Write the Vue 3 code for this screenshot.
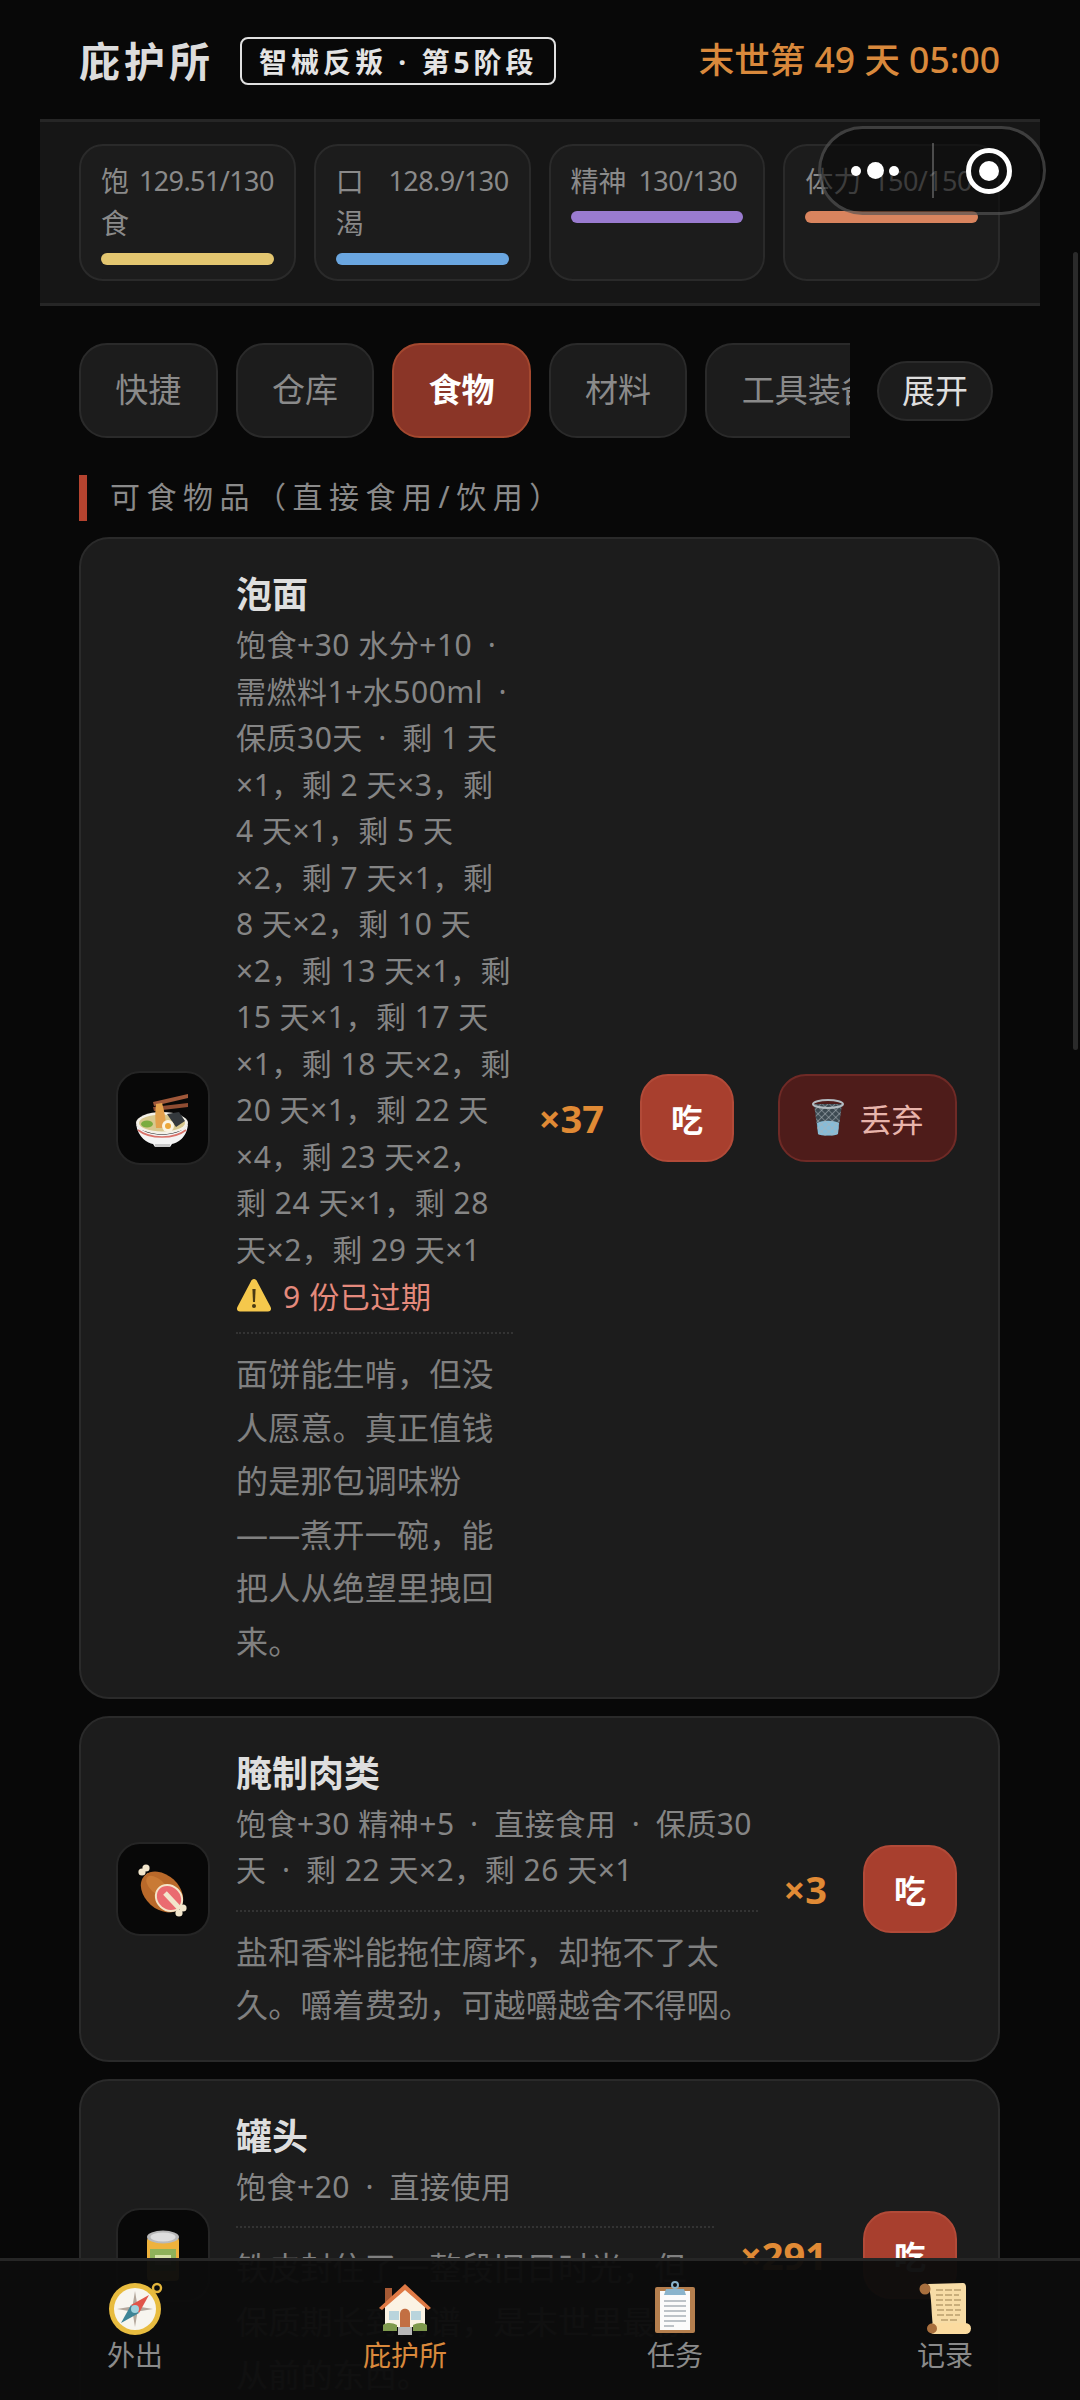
<script setup>
import { ref } from "vue";

const stats = [
  { label: "饱食", value: "129.51/130", color: "#e3c670" },
  { label: "口渴", value: "128.9/130", color: "#6aa6e0" },
  { label: "精神", value: "130/130", color: "#9a7bd0" },
  { label: "体力", value: "150/150", color: "#d9845e" }
];

const tabs = ["快捷", "仓库", "食物", "材料", "工具装备"];
const activeTab = ref("食物");

// the dots between parts of a description sit wider than a plain space
function spaced(line) {
  return line.replace(/ · /g, "\u2002·\u2002").replace(/ ·$/, "\u2002·");
}

// desc and lore are split by line, the wraps have to stay as they are
const items = [
  {
    name: "泡面",
    icon: "noodle",
    count: 37,
    canDiscard: true,
    expired: 9,
    desc: [
      "饱食+30 水分+10 ·",
      "需燃料1+水500ml ·",
      "保质30天 · 剩 1 天",
      "×1，剩 2 天×3，剩",
      "4 天×1，剩 5 天",
      "×2，剩 7 天×1，剩",
      "8 天×2，剩 10 天",
      "×2，剩 13 天×1，剩",
      "15 天×1，剩 17 天",
      "×1，剩 18 天×2，剩",
      "20 天×1，剩 22 天",
      "×4，剩 23 天×2，",
      "剩 24 天×1，剩 28",
      "天×2，剩 29 天×1"
    ],
    lore: ["面饼能生啃，但没", "人愿意。真正值钱", "的是那包调味粉", "——煮开一碗，能", "把人从绝望里拽回", "来。"]
  },
  {
    name: "腌制肉类",
    icon: "meat",
    count: 3,
    desc: ["饱食+30 精神+5 · 直接食用 · 保质30", "天 · 剩 22 天×2，剩 26 天×1"],
    lore: ["盐和香料能拖住腐坏，却拖不了太", "久。嚼着费劲，可越嚼越舍不得咽。"]
  },
  {
    name: "罐头",
    icon: "can",
    count: 291,
    desc: ["饱食+20 · 直接使用"],
    lore: ["铁皮封住了一整段旧日时光，但", "保质期长到离谱，是末世里最像", "从前的东西。"]
  }
];

const navs = [
  { key: "out", label: "外出" },
  { key: "home", label: "庇护所" },
  { key: "task", label: "任务" },
  { key: "log", label: "记录" }
];
const activeNav = ref("home");
</script>

<template>
  <div class="page">
    <!-- Header -->
    <header class="top">
      <div class="top-left">
        <span class="title">庇护所</span>
        <span class="stage">智械反叛 · 第5阶段</span>
      </div>
      <span class="date">末世第 49 天 05:00</span>
    </header>

    <!-- Status -->
    <section class="panel">
      <div v-for="s in stats" :key="s.label" class="stat">
        <div class="stat-head">
          <span class="stat-label">{{ s.label }}</span>
          <span class="stat-value">{{ s.value }}</span>
        </div>
        <div class="bar" :style="{ background: s.color }"></div>
      </div>
    </section>

    <div class="main">
      <!-- Tabs -->
      <div class="tab-row">
        <div class="tabs">
          <div v-for="t in tabs" :key="t" class="tab" :class="{ active: t === activeTab }" @click="activeTab = t">{{ t }}</div>
        </div>
        <div class="expand">展开</div>
      </div>

      <div class="section">可食物品（直接食用/饮用）</div>

      <!-- Items -->
      <div class="list">
        <div v-for="item in items" :key="item.name" class="card">
          <div class="icon-box">
            <svg v-if="item.icon === 'noodle'" width="60" height="60" viewBox="0 0 60 60">
              <path d="M20 14 L55 6 L55 10 L21 18Z" fill="#a0583a" />
              <path d="M20 19 L55 15 L55 19 L21 23Z" fill="#8f4c32" />
              <ellipse cx="29" cy="35" rx="26" ry="11" fill="#f4f1e8" />
              <ellipse cx="29" cy="35" rx="23" ry="8.5" fill="#d8c88e" />
              <path d="M23 16 C22 24 22 32 23 40 L33 40 C33 30 31 22 29 15Z" fill="#e3a14c" />
              <path d="M34 26 L46 24 L52 33 L43 39Z" fill="#34393d" />
              <ellipse cx="14" cy="36" rx="6" ry="3.5" fill="#7bac3f" />
              <circle cx="35" cy="38" r="6" fill="#fbf4e2" />
              <circle cx="35" cy="38" r="3" fill="#eca83a" />
              <path d="M3 36 C5 50 15 55 20 56 L22 59 L37 59 L39 56 C44 55 54 50 55 36 C50 44 40 46.5 29 46.5 C18 46.5 8 44 3 36Z" fill="#f4f4f4" />
              <path d="M5 42 C12 47.5 20 49 29 49 C38 49 46 47.5 53 42" fill="none" stroke="#d9736b" stroke-width="1.6" />
              <path d="M22 56 L37 56 L37 59 L22 59Z" fill="#c9c9c9" />
            </svg>
            <svg v-else-if="item.icon === 'meat'" width="60" height="60" viewBox="0 0 60 60">
              <path d="M13 16 L25 27" stroke="#f2e6cc" stroke-width="5" />
              <circle cx="9" cy="13" r="3.6" fill="#f2e6cc" />
              <circle cx="13" cy="9" r="3.6" fill="#f2e6cc" />
              <ellipse cx="29" cy="33" rx="24" ry="17" transform="rotate(42 29 33)" fill="#b9692a" />
              <ellipse cx="24" cy="27" rx="13" ry="7" transform="rotate(42 24 27)" fill="#c97a35" />
              <ellipse cx="36" cy="39" rx="15" ry="13" transform="rotate(42 36 39)" fill="#f4e4c8" />
              <ellipse cx="36" cy="39" rx="13" ry="11" transform="rotate(42 36 39)" fill="#ea6b70" />
              <path d="M32 34 L47 50" stroke="#f2e6cc" stroke-width="5" />
              <circle cx="50" cy="49" r="3.6" fill="#f2e6cc" />
              <circle cx="46" cy="54" r="3.6" fill="#f2e6cc" />
            </svg>
            <svg v-else width="60" height="60" viewBox="0 0 60 60">
              <rect x="14" y="12" width="32" height="44" rx="4" fill="#eeb23c" />
              <rect x="17" y="24" width="26" height="22" fill="#8fb25a" />
              <rect x="22" y="30" width="16" height="10" fill="#d7e3a8" />
              <ellipse cx="30" cy="12" rx="16" ry="6.5" fill="#b9b9b9" />
              <ellipse cx="30" cy="12" rx="12.5" ry="4.5" fill="#dedede" />
            </svg>
          </div>

          <div class="info">
            <div class="name">{{ item.name }}</div>
            <div v-for="line in item.desc" :key="line" class="desc">{{ spaced(line) }}</div>
            <div v-if="item.expired" class="expired">
              <svg width="36" height="36" viewBox="0 0 36 36">
                <path d="M18 2 C19.5 2 20.4 3 21 4.2 L34.6 30 C35.8 32.4 34.6 34.4 32 34.4 L4 34.4 C1.4 34.4 .2 32.4 1.4 30 L15 4.2 C15.6 3 16.5 2 18 2Z" fill="#f5c84c" />
                <path d="M16.4 12 L19.6 12 L19 25 L17 25Z" fill="#4a3a14" />
                <circle cx="18" cy="29" r="2" fill="#4a3a14" />
              </svg>
              <span>{{ item.expired }} 份已过期</span>
            </div>
            <div class="lore">
              <div v-for="line in item.lore" :key="line">{{ line }}</div>
            </div>
          </div>

          <span class="count">×{{ item.count }}</span>
          <div class="actions">
            <div class="eat">吃</div>
            <div v-if="item.canDiscard" class="discard">
              <svg width="34" height="38" viewBox="0 0 34 38">
                <defs>
                  <pattern id="mesh" width="5" height="5" patternUnits="userSpaceOnUse" patternTransform="rotate(45)">
                    <path d="M0 0H5M0 0V5" stroke="#aab2b8" stroke-width="1.1" />
                  </pattern>
                </defs>
                <path d="M3 5 L7 35 C10 37 24 37 27 35 L31 5Z" fill="#3d4a52" />
                <path d="M6 24 C12 21 22 21 28 24 L27 35 C24 37 10 37 7 35Z" fill="#86bcd8" />
                <path d="M3 5 L7 35 C10 37 24 37 27 35 L31 5Z" fill="url(#mesh)" />
                <ellipse cx="17" cy="5" rx="15" ry="4" fill="none" stroke="#b4bcc2" stroke-width="2" />
              </svg>
              <span>丢弃</span>
            </div>
          </div>
        </div>
      </div>
    </div>

    <!-- Bottom nav -->
    <nav class="nav">
      <div v-for="n in navs" :key="n.key" class="nav-item" :class="{ active: n.key === activeNav }" @click="activeNav = n.key">
        <svg width="64" height="56" viewBox="0 0 64 56">
          <g v-if="n.key === 'out'">
            <circle cx="54" cy="7" r="4" fill="none" stroke="#e3b53c" stroke-width="2.4" />
            <circle cx="32" cy="28" r="26" fill="#e8bc3f" />
            <circle cx="32" cy="28" r="21" fill="#f7f5ef" />
            <path d="M32 10 L35 28 L32 46 L29 28Z M14 28 L32 25 L50 28 L32 31Z" fill="#b3a79c" />
            <path d="M46 14 L36 32 L28 24Z" fill="#e0554a" />
            <path d="M18 42 L28 24 L36 32Z" fill="#3e8496" />
            <circle cx="32" cy="28" r="4" fill="#9fd2de" />
          </g>
          <g v-else-if="n.key === 'home'">
            <rect x="12" y="7" width="7" height="14" fill="#a65a35" />
            <path d="M12 24 L32 8 L52 24 L52 46 L12 46Z" fill="#fbf3e4" />
            <path d="M6 27 L32 3 L58 27 L55 29 L32 9 L9 29Z" fill="#e07a45" />
            <rect x="16" y="30" width="10" height="9" fill="#b9d4dc" />
            <rect x="38" y="30" width="10" height="9" fill="#b9d4dc" />
            <path d="M27 46 L27 33 C27 26 37 26 37 33 L37 46Z" fill="#c26f43" />
            <path d="M10 44 C14 41 20 42 24 44 L24 50 L10 50Z M40 44 C44 42 50 41 54 44 L54 50 L40 50Z" fill="#7f9a4e" />
            <rect x="25" y="46" width="14" height="8" fill="#b8b8b8" />
          </g>
          <g v-else-if="n.key === 'task'">
            <rect x="12" y="6" width="40" height="46" rx="2" fill="#b57f4e" />
            <rect x="17" y="10" width="30" height="39" fill="#fbfbfb" />
            <circle cx="32" cy="4" r="3" fill="none" stroke="#8ab4cc" stroke-width="2" />
            <path d="M21 14 L23 8 L41 8 L43 14Z" fill="#8ab4cc" />
            <path d="M21 20 H43 M21 25 H43 M21 30 H43 M21 35 H43 M21 40 H43 M21 45 H31" stroke="#a9b1b8" stroke-width="1.4" />
          </g>
          <g v-else>
            <path d="M15 3 L50 2 C52 2 53 4 53 6 L53 44 L20 46 C18 30 19 15 15 3Z" fill="#f7dca6" />
            <path d="M23 9 H48 M23 14 H46 M23 19 H48 M23 24 H47 M24 29 H48 M24 34 H47 M28 39 H46" stroke="#bb9e6d" stroke-width="1.4" stroke-dasharray="7 2" />
            <circle cx="12" cy="8" r="5.5" fill="#a86f3e" />
            <rect x="16" y="42" width="42" height="11" rx="5.5" fill="#fbdba0" />
            <circle cx="19" cy="47.5" r="5" fill="#a86f3e" />
          </g>
        </svg>
        <span class="nav-label">{{ n.label }}</span>
      </div>
    </nav>

    <!-- Mini program capsule -->
    <div class="capsule">
      <div class="dots"><i></i><i class="big"></i><i></i></div>
      <div class="divider"></div>
      <div class="target"><i></i></div>
    </div>

    <div class="scrollbar"></div>
  </div>
</template>

<style>
html,
body {
  margin: 0;
  background: #080808;
}
</style>

<style scoped>
.page {
  position: relative;
  width: 1080px;
  height: 2400px;
  overflow: hidden;
  background: #080808;
  color: #8a8a8a;
  font-family: "Noto Sans", "Noto Sans CJK SC", sans-serif;
}

.top {
  height: 119px;
  padding: 0 80px 0 79px;
  box-sizing: border-box;
  display: flex;
  align-items: center;
  justify-content: space-between;
}

.top-left {
  display: flex;
  align-items: center;
  gap: 30px;
}

.title {
  font-size: 41px;
  line-height: 50px;
  font-weight: 700;
  letter-spacing: 4px;
  color: #dcdcdc;
  margin-right: -4px;
  margin-top: 2px;
}

.stage {
  height: 48px;
  box-sizing: border-box;
  margin-top: 3px;
  padding: 0 17px;
  display: flex;
  align-items: center;
  border: 2px solid #e0e0e0;
  border-radius: 8px;
  font-size: 28px;
  font-weight: 700;
  letter-spacing: 4px;
  color: #e4e4e4;
  white-space: nowrap;
}

.date {
  margin-bottom: 5px;
  font-size: 35.5px;
  font-weight: 500;
  color: #d9893c;
  white-space: nowrap;
}

.panel {
  margin: 0 40px;
  padding: 22px 40px 22px 39px;
  display: grid;
  grid-template-columns: repeat(4, minmax(0, 1fr));
  gap: 18px;
  background: #161616;
  border-top: 3px solid #262626;
  border-bottom: 3px solid #262626;
}

.stat {
  padding: 14px 20px;
  background: #1c1c1c;
  border: 2px solid #2a2a2a;
  border-radius: 24px;
}

.stat-head {
  display: flex;
  gap: 12px;
  font-size: 28px;
  line-height: 42px;
  color: #8a8a8a;
}

.stat-label {
  min-width: 0;
}

.stat-value {
  font-size: 27px;
  letter-spacing: -0.6px;
  white-space: nowrap;
  flex-shrink: 0;
}

.bar {
  height: 12px;
  margin-top: 9px;
  border-radius: 6px;
}

.main {
  padding: 37px 80px 0 79px;
}

.tab-row {
  display: flex;
  align-items: center;
  gap: 27px;
}

.tabs {
  width: 771px;
  display: flex;
  gap: 18px;
  overflow: hidden;
}

.tab {
  flex-shrink: 0;
  height: 95px;
  box-sizing: border-box;
  padding: 0 34.3px 5px;
  display: flex;
  align-items: center;
  background: #1c1c1c;
  border: 2px solid #2a2a2a;
  border-radius: 28px;
  font-size: 33px;
  color: #8a8a8a;
  white-space: nowrap;
}

.tab.active {
  background: #8a3527;
  border-color: #a4482f;
  color: #fff;
  font-weight: 700;
}

.expand {
  height: 60px;
  box-sizing: border-box;
  padding: 0 23px 3px;
  display: flex;
  align-items: center;
  background: #1c1c1c;
  border: 2px solid #2a2a2a;
  border-radius: 30px;
  font-size: 33px;
  color: #dedede;
  white-space: nowrap;
}

.section {
  height: 46px;
  box-sizing: border-box;
  margin: 37px 0 16px;
  padding: 0 0 6px 23px;
  display: flex;
  align-items: center;
  border-left: 8px solid #b5432f;
  font-size: 30px;
  letter-spacing: 6.5px;
  color: #8a8a8a;
}

.list {
  display: flex;
  flex-direction: column;
  gap: 17px;
}

.card {
  padding: 28px 41px 28px 35px;
  display: flex;
  align-items: center;
  background: #1c1c1c;
  border: 2px solid #2a2a2a;
  border-radius: 30px;
}

.icon-box {
  width: 94px;
  height: 94px;
  flex-shrink: 0;
  box-sizing: border-box;
  margin-right: 26px;
  display: flex;
  align-items: center;
  justify-content: center;
  background: #080808;
  border: 2px solid #252525;
  border-radius: 24px;
}

.info {
  flex: 1;
  min-width: 0;
  margin-right: 26px;
  padding-top: 6px;
}

.name {
  font-size: 36px;
  line-height: 44px;
  font-weight: 700;
  color: #dedede;
  margin-bottom: 5px;
}

.desc {
  font-size: 30px;
  line-height: 46.5px;
  letter-spacing: 0.5px;
  color: #858585;
  white-space: nowrap;
}

.expired {
  height: 43px;
  display: flex;
  align-items: center;
  gap: 11px;
  font-size: 30px;
  letter-spacing: 0.6px;
  color: #e58a7c;
}

.lore {
  margin-top: 16px;
  padding-top: 13px;
  border-top: 2px dotted #333;
  font-size: 32px;
  line-height: 53.6px;
  letter-spacing: 0.2px;
  color: #808080;
  white-space: nowrap;
}

.count {
  margin-right: 36px;
  font-size: 38px;
  font-weight: 700;
  color: #e08a35;
  white-space: nowrap;
}

.actions {
  display: flex;
  gap: 44px;
}

.eat {
  width: 94px;
  height: 88px;
  box-sizing: border-box;
  display: flex;
  align-items: center;
  justify-content: center;
  background: #a83f2e;
  border: 2px solid #b24a38;
  border-radius: 28px;
  font-size: 32px;
  font-weight: 700;
  color: #fff;
}

.discard {
  width: 179px;
  height: 88px;
  box-sizing: border-box;
  display: flex;
  align-items: center;
  justify-content: center;
  gap: 14px;
  background: #4e1c1a;
  border: 2px solid #6f2a26;
  border-radius: 28px;
  font-size: 32px;
  color: #e8b4ab;
}

.nav {
  position: absolute;
  left: 0;
  right: 0;
  bottom: 0;
  height: 142px;
  box-sizing: border-box;
  padding-top: 20px;
  display: grid;
  grid-template-columns: repeat(4, 1fr);
  background: rgba(12, 12, 12, 0.97);
  border-top: 3px solid #262626;
}

.nav-item {
  display: flex;
  flex-direction: column;
  align-items: center;
}

.nav-label {
  font-size: 28px;
  line-height: 36px;
  color: #8a8a8a;
}

.nav-item.active .nav-label {
  color: #d9893c;
}

.capsule {
  position: absolute;
  left: 818px;
  top: 126px;
  width: 228px;
  height: 89px;
  box-sizing: border-box;
  display: flex;
  align-items: center;
  background: rgba(8, 8, 8, 0.6);
  border: 3px solid rgba(255, 255, 255, 0.2);
  border-radius: 45px;
}

.dots {
  width: 111px;
  display: flex;
  align-items: center;
  justify-content: center;
  gap: 5.5px;
  padding-right: 3px;
  box-sizing: border-box;
}

.dots i {
  width: 10px;
  height: 10px;
  border-radius: 50%;
  background: #fff;
}

.dots i.big {
  width: 17px;
  height: 17px;
}

.divider {
  width: 2px;
  height: 55px;
  background: rgba(255, 255, 255, 0.25);
}

.target {
  width: 46px;
  height: 46px;
  margin-left: 32px;
  box-sizing: border-box;
  display: flex;
  align-items: center;
  justify-content: center;
  border: 5px solid #fff;
  border-radius: 50%;
}

.target i {
  width: 20px;
  height: 20px;
  border-radius: 50%;
  background: #fff;
}

.scrollbar {
  position: absolute;
  left: 1073px;
  top: 252px;
  width: 5px;
  height: 798px;
  border-radius: 3px;
  background: rgba(255, 255, 255, 0.14);
}
</style>
